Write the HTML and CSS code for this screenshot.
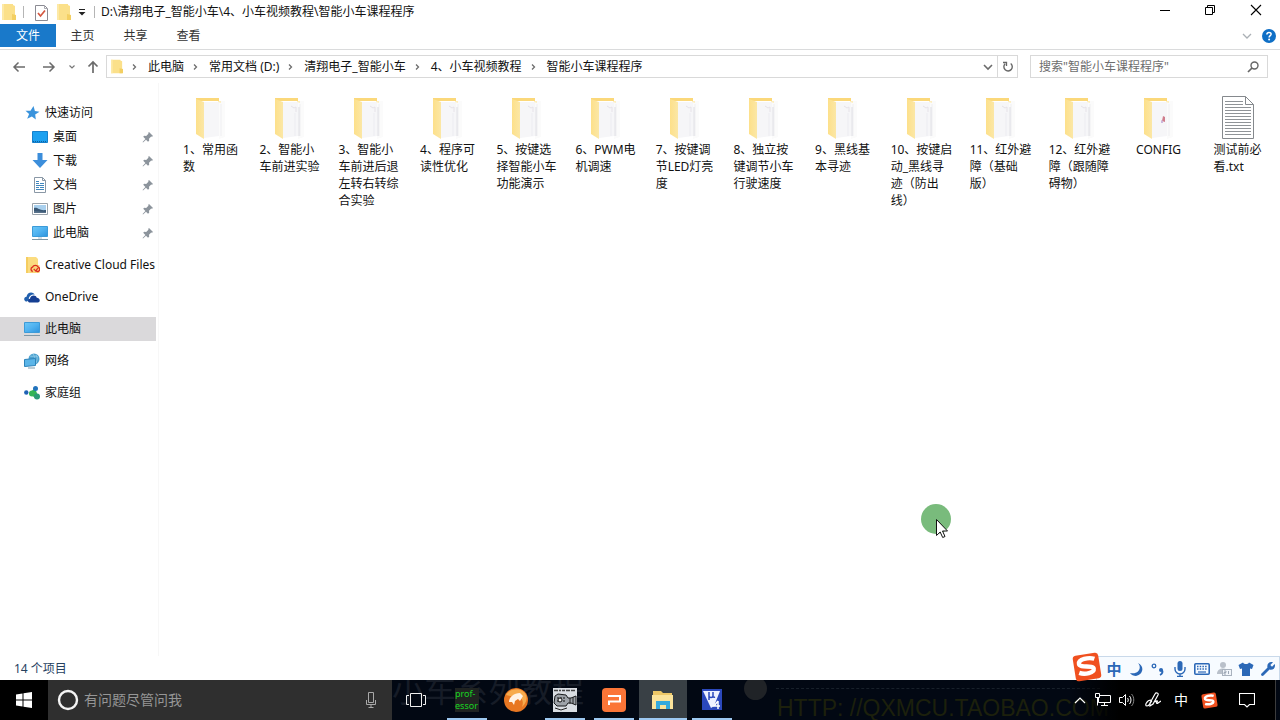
FILE: index.html
```html
<!DOCTYPE html>
<html lang="zh-CN">
<head>
<meta charset="utf-8">
<title>智能小车课程程序</title>
<link rel="stylesheet" href="styles.css">
</head>
<body>
<svg class="defs" aria-hidden="true">
  <defs>
    <linearGradient id="screen" x1="0" y1="0" x2="1" y2="1"><stop offset="0" stop-color="#6cc8f8"/><stop offset=".5" stop-color="#4fb2f0"/><stop offset="1" stop-color="#2c93dd"/></linearGradient>
    <linearGradient id="side" x1="0" y1="0" x2="1" y2="0"><stop offset="0" stop-color="#fde08a"/><stop offset="1" stop-color="#fbe7a6"/></linearGradient>
    <symbol id="mini-folder" viewBox="0 0 14 18"><path d="M0 1h11v1l2 1v14H0z" fill="#fbe08a"/><path d="M10 11l4 1v5h-4z" fill="#f3cf62"/><path d="M0 1h2v16H0z" fill="#fde9a6"/></symbol>
    <symbol id="crumb" viewBox="0 0 8 8"><path d="M2 1.500L4.500 4 2 6.500" fill="none" stroke="#6d6d6d" stroke-width="1.300"/></symbol>
    <symbol id="pin" viewBox="0 0 12 12"><path d="M7 1l4 4-1 .7-.8-.2-2.200 2.300.2 2-1.200 1L4 8.700 1 11.500.6 11 3.400 8 1.200 5.800l1-1 2 .1 2.200-2.200L6.300 1.700z" fill="#8c949c"/></symbol>
    <symbol id="monitor" viewBox="0 0 16 16"><path d="M.5 1.500h15v10H.5z" fill="url(#screen)" stroke="#3c9bd8"/><path d="M6 12h4v2H6z" fill="#d3e0e8"/><path d="M0 14.500h16" stroke="#7d97a6"/></symbol>
    <symbol id="folder" viewBox="0 0 48 48"><path d="M9 5h23v3H9z" fill="#fbd87a"/><path d="M32 8h6v36l-6 2z" fill="#fbfbfb"/><path d="M17 9h15v34l-15 2z" fill="#f6f6f8"/><path d="M31 8h3v2l-3-1z" fill="#fdeec0"/><path d="M34 11v32" stroke="#efeff2"/><path d="M9 6l8 3v37l-8-5z" fill="url(#side)"/></symbol>
    <symbol id="papers" viewBox="0 0 48 48"><path d="M25 13l3 2 2-1v5" fill="none" stroke="#e6e2e8"/><path d="M29 20v23" stroke="#ececf1"/><path d="M33 14v29" stroke="#dddde3"/></symbol>
    <symbol id="sogou" viewBox="0 0 28 28"><g transform="rotate(-9 14 14)"><rect x="2" y="2" width="24" height="24" rx="3" fill="#f0501f"/><path d="M22 7.500C17 5 7 5.500 7 10c0 4.500 13 2.500 13 6.500 0 4-9 4.500-14 1.800" fill="none" stroke="#fff" stroke-width="4"/></g></symbol>
  </defs>
</svg>
<div class="desktop">
  <header class="titlebar">
    <svg class="mini"><use href="#mini-folder"/></svg>
    <span class="rule"></span>
    <button class="tool" aria-label="属性"><svg width="13" height="17" viewBox="0 0 13 17"><path d="M.5 1.500h9l3 3v12H.5z" fill="#fff" stroke="#8b8b93"/><path d="M9.500 1.500v3h3" fill="none" stroke="#a9a9b0"/><path d="M3 9l2.500 3L10 6.500" fill="none" stroke="#d4573f" stroke-width="1.700"/></svg></button>
    <button class="tool" aria-label="新建文件夹"><svg class="mini"><use href="#mini-folder"/></svg></button>
    <button class="tool" aria-label="自定义快速访问工具栏"><svg width="8" height="8" viewBox="0 0 8 8"><path d="M1 1.500h6" stroke="#222"/><path d="M.5 4h7L4 7.500z" fill="#222"/></svg></button>
    <span class="rule rule-title"></span>
    <h1 class="title">D:\清翔电子_智能小车\4、小车视频教程\智能小车课程程序</h1>
    <div class="window-buttons">
      <button aria-label="最小化"><svg width="12" height="12" viewBox="0 0 12 12"><path d="M1 6.500h10" stroke="#000"/></svg></button>
      <button aria-label="还原"><svg width="12" height="12" viewBox="0 0 12 12"><path d="M1.500 3.500h7v7h-7zM3.500 3.500v-2h7v7h-2" fill="none" stroke="#000"/></svg></button>
      <button aria-label="关闭"><svg width="12" height="12" viewBox="0 0 12 12"><path d="M1 1l10 10M11 1L1 11" stroke="#000" stroke-width="1.100"/></svg></button>
    </div>
  </header>
  <nav class="tabs">
    <button class="tab tab-file">文件</button>
    <button class="tab">主页</button>
    <button class="tab">共享</button>
    <button class="tab">查看</button>
    <button class="tab-tool" aria-label="展开功能区"><svg width="10" height="8" viewBox="0 0 10 8"><path d="M1 2l4 4 4-4" fill="none" stroke="#aab0b5" stroke-width="1.300"/></svg></button>
    <button class="tab-tool" aria-label="帮助"><svg width="14" height="14" viewBox="0 0 14 14"><circle cx="7" cy="7" r="7" fill="#0f6fc6"/><path d="M4.900 5.400C4.900 2.700 9.200 2.800 9.100 5.200 9 6.700 7.100 6.600 7.100 8.500" fill="none" stroke="#fff" stroke-width="1.500"/><circle cx="7.100" cy="10.600" r="1" fill="#fff"/></svg></button>
  </nav>
  <div class="navbar">
    <div class="arrows">
      <button aria-label="后退"><svg width="14" height="12" viewBox="0 0 14 12"><path d="M13 6H2M6.500 1.500L2 6l4.500 4.500" fill="none" stroke="#6b6b6b" stroke-width="1.500"/></svg></button>
      <button aria-label="前进"><svg width="14" height="12" viewBox="0 0 14 12"><path d="M1 6h11M7.500 1.500L12 6l-4.500 4.500" fill="none" stroke="#6b6b6b" stroke-width="1.500"/></svg></button>
      <button class="narrow" aria-label="最近浏览的位置"><svg width="8" height="6" viewBox="0 0 8 6"><path d="M1.500 1.500L4 4l2.500-2.500" fill="none" stroke="#777" stroke-width="1.200"/></svg></button>
      <button class="up" aria-label="上移"><svg width="12" height="14" viewBox="0 0 12 14"><path d="M6 13V2M1.500 6.500L6 2l4.500 4.500" fill="none" stroke="#6b6b6b" stroke-width="1.700"/></svg></button>
    </div>
    <div class="address">
      <svg class="mini"><use href="#mini-folder"/></svg>
      <svg class="sep"><use href="#crumb" x="8" y="7" width="8" height="8"/></svg><button>此电脑</button>
      <svg class="sep"><use href="#crumb" x="8" y="7" width="8" height="8"/></svg><button>常用文档 (D:)</button>
      <svg class="sep"><use href="#crumb" x="8" y="7" width="8" height="8"/></svg><button>清翔电子_智能小车</button>
      <svg class="sep"><use href="#crumb" x="8" y="7" width="8" height="8"/></svg><button>4、小车视频教程</button>
      <svg class="sep"><use href="#crumb" x="8" y="7" width="8" height="8"/></svg><button>智能小车课程程序</button>
      <button class="addr-drop" aria-label="以前的位置"><svg width="10" height="8" viewBox="0 0 10 8"><path d="M1 2l4 4 4-4" fill="none" stroke="#6b6b6b" stroke-width="1.600"/></svg></button>
      <button class="refresh" aria-label="刷新"><svg width="12" height="12" viewBox="0 0 12 12"><path d="M8.700 2.500a4.200 4.200 0 1 1-5.600.3" fill="none" stroke="#666" stroke-width="1.400"/><path d="M1 1.500h3.500V5" fill="none" stroke="#666" stroke-width="1.300"/></svg></button>
    </div>
    <label class="search"><input type="search" placeholder='搜索"智能小车课程程序"' aria-label="搜索"><svg width="12" height="12" viewBox="0 0 12 12"><circle cx="7.500" cy="4.500" r="3.500" fill="none" stroke="#666" stroke-width="1.400"/><path d="M5 7L1 11" stroke="#666" stroke-width="1.700"/></svg></label>
  </div>
  <div class="body">
    <aside class="sidebar">
      <ul class="group">
        <li class="row"><svg viewBox="0 0 16 16"><path d="M9.500 1l1.400 5 4.600.8-4.300 2.600.6 5.100-3.900-3.100-4.700 2.300 1.900-4.800L1.500 5.700l5 .1z" fill="#3a93dc"/></svg><span>快速访问</span></li>
        <li class="row sub"><svg viewBox="0 0 16 16"><path d="M.5 2.500h15v11H.5z" fill="#1ba0f0" stroke="#1580cc"/><path d="M1 12.500h14" stroke="#0f5f9e" stroke-dasharray="1 1"/></svg><span>桌面</span><svg class="pin"><use href="#pin"/></svg></li>
        <li class="row sub"><svg viewBox="0 0 16 16"><path d="M5.500 0h5v7H15.500l-7.500 8L.5 7h5z" fill="#3c8edb"/></svg><span>下载</span><svg class="pin"><use href="#pin"/></svg></li>
        <li class="row sub"><svg viewBox="0 0 16 16"><path d="M2.500.5h8l3 3v12h-11z" fill="#fff" stroke="#8a98a6"/><path d="M4 4.500h3M4 6.500h3M8 6.500h4M4 8.500h8M4 10.500h3M8 10.500h4M4 12.500h8" stroke="#3f86bd"/><path d="M10.500.5v3h3" fill="none" stroke="#8a98a6"/></svg><span>文档</span><svg class="pin"><use href="#pin"/></svg></li>
        <li class="row sub"><svg viewBox="0 0 16 16"><path d="M.5 2.500h15v11H.5z" fill="#fff" stroke="#9aa3ab"/><path d="M2 4h12v8H2z" fill="#a9d0ee"/><path d="M2 7c4-1 5 3 12 2v3H2z" fill="#3a5875"/><path d="M2 10l12 1v1H2z" fill="#58718a"/></svg><span>图片</span><svg class="pin"><use href="#pin"/></svg></li>
        <li class="row sub"><svg><use href="#monitor"/></svg><span>此电脑</span><svg class="pin"><use href="#pin"/></svg></li>
      </ul>
      <ul class="group"><li class="row"><svg viewBox="0 0 16 16"><path d="M2 0h10l2 2v14H2z" fill="#fbdc80"/><path d="M2 0h2v16H2z" fill="#f5cd60"/><path d="M6 8h9.500v8H6z" fill="#f8d578"/><path d="M8.800 14.500a2.300 2.300 0 0 1-.3-4.400 3.300 3.300 0 0 1 5.700 0 2.300 2.300 0 0 1-.4 4.400c-2 .2-3-1.300-4-2.500m1.500 2.300c1.700-.2 1-3 3-3" fill="none" stroke="#dd2d20" stroke-width="1.300"/></svg><span>Creative Cloud Files</span></li></ul>
      <ul class="group"><li class="row"><svg viewBox="0 0 16 16"><path d="M3 12.500C-.8 12.500-.5 8 2.500 7.800 3.200 3 8.500 2 10.800 5.500 7 5 4 8 5 11z" fill="#2160ae"/><path d="M6 13.500C2.800 13.500 4 9.600 6 9.800c.6-4.200 6-4.200 6.800-1 3.500.2 4 4.700 1 4.700z" fill="#153e92"/></svg><span>OneDrive</span></li></ul>
      <ul class="group"><li class="row selected"><svg><use href="#monitor"/></svg><span>此电脑</span></li></ul>
      <ul class="group"><li class="row"><svg viewBox="0 0 16 16"><circle cx="10" cy="6" r="5.500" fill="#4ba1cf"/><path d="M6 3c3 1 5-1 8 1M9 1c2 3 3 6 1 10M12 2c2 3 1 5 0 8" fill="none" stroke="#8cc8e6"/><path d="M.5 6.500l11-1v7l-11 1z" fill="#5bb5e8" stroke="#2d83b9"/><path d="M4 15h7" stroke="#7e9cad"/></svg><span>网络</span></li></ul>
      <ul class="group"><li class="row"><svg viewBox="0 0 16 16"><circle cx="2.300" cy="7.500" r="2.200" fill="#1f62b5"/><path d="M5.500 8L11 3l3 8-3 2z" fill="#35b456"/><circle cx="8" cy="8.500" r="3" fill="#35b456"/><circle cx="11.500" cy="3.500" r="2.500" fill="#2273bd"/><circle cx="13" cy="11.500" r="3" fill="#2d9a76"/></svg><span>家庭组</span></li></ul>
    </aside>
    <main class="files">
      <figure class="file"><svg><use href="#folder"/></svg><figcaption>1、常用函<br>数</figcaption></figure>
      <figure class="file"><svg><use href="#folder"/><use href="#papers"/></svg><figcaption>2、智能小<br>车前进实验</figcaption></figure>
      <figure class="file"><svg><use href="#folder"/><use href="#papers"/></svg><figcaption>3、智能小<br>车前进后退<br>左转右转综<br>合实验</figcaption></figure>
      <figure class="file"><svg><use href="#folder"/><use href="#papers"/></svg><figcaption>4、程序可<br>读性优化</figcaption></figure>
      <figure class="file"><svg><use href="#folder"/><use href="#papers"/></svg><figcaption>5、按键选<br>择智能小车<br>功能演示</figcaption></figure>
      <figure class="file"><svg><use href="#folder"/><use href="#papers"/></svg><figcaption>6、PWM电<br>机调速</figcaption></figure>
      <figure class="file"><svg><use href="#folder"/><use href="#papers"/></svg><figcaption>7、按键调<br>节LED灯亮<br>度</figcaption></figure>
      <figure class="file"><svg><use href="#folder"/><use href="#papers"/></svg><figcaption>8、独立按<br>键调节小车<br>行驶速度</figcaption></figure>
      <figure class="file"><svg><use href="#folder"/><use href="#papers"/></svg><figcaption>9、黑线基<br>本寻迹</figcaption></figure>
      <figure class="file"><svg><use href="#folder"/><use href="#papers"/></svg><figcaption>10、按键启<br>动_黑线寻<br>迹（防出<br>线）</figcaption></figure>
      <figure class="file"><svg><use href="#folder"/><use href="#papers"/></svg><figcaption>11、红外避<br>障（基础<br>版）</figcaption></figure>
      <figure class="file"><svg><use href="#folder"/><use href="#papers"/></svg><figcaption>12、红外避<br>障（跟随障<br>碍物）</figcaption></figure>
      <figure class="file"><svg viewBox="0 0 48 48"><use href="#folder"/><path d="M28 23l2 1v5l-3-1z" fill="#cf7d8c"/><path d="M26 27l2 1v2h-2z" fill="#cdb8dc"/></svg><figcaption>CONFIG</figcaption></figure>
      <figure class="file"><svg viewBox="0 0 48 48"><path d="M8.500 3.500h23l8 8v34h-31z" fill="#fff" stroke="#85898d"/><path d="M31.500 3.500v8h8" fill="none" stroke="#85898d"/><path d="M11 8.500h18M11 11.500h18M11 14.500h26M11 17.500h26M11 20.500h26M11 23.500h26M11 26.500h26M11 29.500h26M11 32.500h26M11 35.500h26M11 38.500h26M11 41.500h26" stroke="#8f9397"/></svg><figcaption>测试前必<br>看.txt</figcaption></figure>
    </main>
  </div>
  <footer class="status">14 个项目</footer>
  <div class="taskbar">
    <span class="wall-title" aria-hidden="true">小车系列教程</span>
    <span class="wall-dot"></span>
    <span class="wall-line"></span>
    <span class="wall-url" aria-hidden="true">HTTP: //QXMCU.TAOBAO.COM</span>
    <button class="start" aria-label="开始"><svg width="16" height="16" viewBox="0 0 16 16"><path d="M0 2.500l6.500-1v6H0zM7.500 1.300L16 0v7.500H7.500zM0 8.500h6.500v6l-6.500-1zM7.500 8.500H16V16l-8.500-1.300z" fill="#fff"/></svg></button>
    <label class="cortana">
      <svg width="22" height="22" viewBox="0 0 22 22"><circle cx="11" cy="11" r="9" fill="none" stroke="#f4f4f4" stroke-width="2.400"/></svg>
      <input type="text" placeholder="有问题尽管问我" aria-label="搜索 Windows">
      <svg width="12" height="18" viewBox="0 0 12 18"><path d="M3.500 1.500h5v10h-5zM1.500 9v4.500h9V9M6 14v3M3.500 16.500h5" fill="none" stroke="#a8a8a8"/></svg>
    </label>
    <div class="apps">
      <button class="app taskview" aria-label="任务视图"><svg width="20" height="16" viewBox="0 0 20 16"><path d="M4.500 1.500h11v13h-11zM3 3.500H.5v9H3M17 3.500h2.500v9H17" fill="none" stroke="#f0f0f0"/></svg></button>
      <button class="app running prof"><span>prof-<br>essor</span></button>
      <button class="app" aria-label="浏览器"><svg width="24" height="24" viewBox="0 0 24 24"><circle cx="12" cy="12" r="12" fill="#e87722"/><path d="M2 7C6 0 18-1 22 7c2 5-1 9-4 12 2-6 0-9-3-9z" fill="#f7ac4e"/><path d="M5 14c0-5 5-9 11-9l3 3-3 5-2-2-3 2-1 4-2-3z" fill="#fff3e5"/></svg></button>
      <button class="app running" aria-label="录像"><svg width="24" height="24" viewBox="0 0 24 24"><path d="M0 0h24v24H0z" fill="#d9dde2"/><path d="M1 2.500h4M6 2.500h2M9 2.500h3M13 2.500h4M18 2.500h4" stroke="#444" stroke-width="1.500"/><path d="M2 8l3-2 8 1 2 3h3l5-2v9l-5-2h-3l-2 3H4l-3-3z" fill="#9da2a8" stroke="#17191b"/><path d="M4 10h8M4 13h4M10 13h3" stroke="#111" stroke-dasharray="2 1"/><circle cx="7" cy="12" r="2" fill="#f0f0f0" stroke="#111"/><path d="M17 10v6M20 9v7M2 20l6 2 6-2" stroke="#222" fill="none"/></svg></button>
      <button class="app running" aria-label="WPS 演示"><svg width="24" height="24" viewBox="0 0 24 24"><rect width="24" height="24" rx="4" fill="#fb7537"/><path d="M6 8h12v5.500H7V17" fill="none" stroke="#fff" stroke-width="2"/></svg></button>
      <button class="app running active" aria-label="文件资源管理器"><svg width="24" height="24" viewBox="0 0 24 24"><path d="M2 3h8l2 2h9v16H2z" fill="#edc766"/><path d="M1 7h21v14H1z" fill="#fbe39a"/><path d="M5 13h14v8h-4v-4H9v4H5z" fill="#35aadd"/></svg></button>
      <button class="app running" aria-label="Keil 4"><svg width="24" height="24" viewBox="0 0 24 24"><path d="M2 1h20v21H2z" fill="#2b48bc"/><path d="M3 3h17l-6 15-3 2z" fill="#eef1ff"/><path d="M9 4v8M9 8c0 2 4 2 4 0V4M13 8c0 2 2 1 2 1" fill="none" stroke="#2b48bc" stroke-width="1.500"/><path d="M18 13l-4 5h6M18 13v8" fill="none" stroke="#fff" stroke-width="1.500"/></svg></button>
    </div>
    <div class="tray">
      <button aria-label="显示隐藏的图标"><svg width="12" height="8" viewBox="0 0 12 8"><path d="M1 7l5-5 5 5" fill="none" stroke="#fff" stroke-width="1.200"/></svg></button>
      <button aria-label="网络"><svg width="16" height="16" viewBox="0 0 16 16"><path d="M5 3.500h10.500v7H3.500V6M6 13.500h7M9.500 11v2M.5 1.500h4v4h-4zM2.500 6v7.500" fill="none" stroke="#fff"/></svg></button>
      <button aria-label="音量"><svg width="16" height="16" viewBox="0 0 16 16"><path d="M.5 5.500h3l3-3v11l-3-3h-3zM8.500 6c1 1 1 3 0 4M10.500 4c2 2 2 6 0 8" fill="none" stroke="#fff"/><path d="M12.500 2c3 3 3 9 0 12" fill="none" stroke="#888"/></svg></button>
      <button class="wide" aria-label="Windows Ink"><svg width="16" height="16" viewBox="0 0 16 16"><path d="M5 11L10 2c1-2 4-1 3 1L8 12l-3 2zM6 8C2 8-1 14 2 14c3 0 3-4 5-5M10 10c2-2 3-1 2 0s0 2 1 1l3-2" fill="none" stroke="#fff" stroke-width="1.200"/></svg></button>
      <button class="wide zh">中</button>
      <button class="wide" aria-label="搜狗输入法"><svg width="17" height="17"><use href="#sogou"/></svg></button>
      <button class="notice" aria-label="操作中心"><svg width="16" height="16" viewBox="0 0 16 16"><path d="M.5 1.500h15v11h-5L8 15l-2.500-2.500h-5z" fill="none" stroke="#fff" stroke-width="1.100"/></svg></button>
    </div>
  </div>
  <div class="ime">
    <svg class="ime-logo"><use href="#sogou"/></svg>
    <button class="zh">中</button>
    <button aria-label="半角"><svg viewBox="0 0 16 16"><path d="M10 2c4 4 1 12-8 10 1 2 4 3 6 3 7-1 9-10 2-13z" fill="#2b68b7"/></svg></button>
    <button aria-label="中文标点"><svg viewBox="0 0 16 16"><circle cx="4" cy="5" r="1.800" fill="none" stroke="#2b68b7" stroke-width="1.300"/><circle cx="11" cy="9" r="2" fill="#2b68b7"/><path d="M12 9c1 2 0 4-2 5" fill="none" stroke="#2b68b7" stroke-width="1.800"/></svg></button>
    <button aria-label="语音"><svg viewBox="0 0 16 16"><rect x="5.500" y="0" width="5" height="10" rx="2.500" fill="#2b68b7"/><path d="M3 6v2a5 5 0 0 0 10 0V6M8 13v2.500M5 15.500h6" fill="none" stroke="#2b68b7" stroke-width="1.400"/></svg></button>
    <button aria-label="软键盘"><svg viewBox="0 0 16 16"><rect x=".8" y="2.800" width="14.400" height="10.400" rx="1" fill="none" stroke="#2b68b7" stroke-width="1.600"/><path d="M3 5.500h10M3 8h10" stroke="#2b68b7" stroke-width="1.500" stroke-dasharray="1.500 1.200"/><path d="M4 11h8" stroke="#2b68b7" stroke-width="1.200"/></svg></button>
    <button aria-label="登录"><svg viewBox="0 0 16 16"><circle cx="7" cy="4" r="3" fill="#b9c0ca"/><path d="M1 13c0-7 11-7 12-1v1z" fill="#b9c0ca"/><rect x="6.500" y="8.500" width="9" height="6" fill="#f2f6fb" stroke="#a9b2be"/><path d="M8 10h2v1.500H8V13h2M12.500 10v3" fill="none" stroke="#9da7b5"/></svg></button>
    <button aria-label="皮肤"><svg viewBox="0 0 16 16"><path d="M5 1.500c1 2 5 2 6 0l4.500 2.500-1.500 4-2-.5V15H4V7.500L2 8 .5 4z" fill="#2b68b7"/></svg></button>
    <button aria-label="工具箱"><svg viewBox="0 0 16 16"><path d="M1.500 12.500l6-6C6.500 3 9.500 0 13 1.300L10.300 4l1.700 1.700L14.700 3C16 6.500 13 9.500 9.500 8.500l-6 6c-1.500 1.300-3.300-.5-2-2z" fill="#2b68b7"/></svg></button>
  </div>
  <svg class="pointer" width="34" height="36" viewBox="0 0 34 36"><circle cx="16" cy="15" r="15" fill="#79bb7c"/><path d="M16.500 15.500v16l3.700-3.500 2.500 5.500 2.300-1-2.500-5.500h5z" fill="#fff" stroke="#111"/></svg>
</div>
</body>
</html>
```
FILE: styles.css
```css
* { box-sizing: border-box; }
body {
  margin: 0;
  font: 12px/16px "Noto Sans", "Noto Sans CJK SC", sans-serif;
  color: #111;
  background: #fff;
}
button, input { font: inherit; color: inherit; border: 0; padding: 0; margin: 0; background: none; outline: 0; }
button { display: flex; align-items: center; justify-content: center; white-space: nowrap; flex: none; }
svg { flex: none; }
ul, figure, h1 { margin: 0; padding: 0; list-style: none; }
.defs { position: absolute; width: 0; height: 0; }
.desktop { position: relative; display: flex; flex-direction: column; height: 100vh; overflow: hidden; }

.titlebar { display: flex; align-items: center; height: 24px; padding-left: 2px; }
.mini { width: 14px; height: 18px; }
.rule { width: 1px; height: 12px; margin: 0 4px 0 7px; background: #b5b5b5; }
.tool { margin-left: 7px; }
.tool + .tool { margin-left: 9px; }
.tool + .tool + .tool { margin-left: 7px; }
.rule-title { margin: 0 6px 0 8px; }
.title { font-size: 12px; font-weight: 400; flex: 1; white-space: nowrap; }
.window-buttons { display: flex; align-self: flex-start; }
.window-buttons button { width: 45px; height: 20px; }
.window-buttons button:last-child { width: 48px; }

.tabs { display: flex; height: 26px; border-bottom: 1px solid #dadbdc; color: #333; }
.tab { width: 53px; height: 23px; }
.tab-file { width: 56px; background: #1979ca; color: #fff; }
.tab-tool { width: 22px; height: 24px; }
.tab + .tab-tool { margin-left: auto; }

.navbar { display: flex; align-items: center; padding: 5px 12px 5px 8px; }
.arrows { display: flex; width: 98px; }
.arrows button { width: 22px; margin-right: 8px; }
.arrows .narrow { width: 8px; margin: 0; }
.arrows .up { width: 34px; margin: 0; }
.address { flex: 1; display: flex; align-items: center; height: 23px; padding-left: 4px; border: 1px solid #d9d9d9; }
.address .mini { width: 12px; height: 17px; }
.sep { width: 25px; height: 22px; }
.address .addr-drop { margin-left: auto; width: 18px; height: 21px; }
.refresh { width: 20px; height: 21px; border-left: 1px solid #d9d9d9; }
.search { display: flex; align-items: center; width: 238px; height: 23px; margin-left: 12px; padding: 0 8px; border: 1px solid #d9d9d9; }
.search input { flex: 1; min-width: 0; }
.search input::placeholder { color: #6d6d6d; opacity: 1; }

.body { flex: 1; display: flex; min-height: 0; }
.sidebar { width: 159px; padding-top: 18px; padding-right: 2px; border-right: 1px solid #f7f7f7; flex: none; }
.group { margin-bottom: 8px; }
.row { display: flex; align-items: center; gap: 5px; height: 24px; padding-left: 24px; overflow: hidden; white-space: nowrap; }
.row svg { width: 16px; height: 16px; }
.row.sub { padding-left: 32px; }
.row.selected { background: #dad9db; }
.row .pin { width: 12px; height: 12px; margin-left: auto; margin-right: 2px; }

.files { flex: 1; display: grid; grid-template-columns: repeat(auto-fill, 79px); align-content: start; padding: 10px 0 0 12px; }
.file { display: flex; flex-direction: column; align-items: center; }
.file > svg { width: 48px; height: 48px; }
.file figcaption { line-height: 17px; white-space: nowrap; }

.status { height: 24px; padding: 5px 14px 3px; color: #26415f; }

.taskbar { position: relative; display: flex; height: 40px; background: #020813; overflow: hidden; }
.start { width: 48px; background: #000; position: relative; }
.cortana { position: relative; display: flex; align-items: center; gap: 5px; width: 344px; padding: 0 15px 0 9px; background: #2f2f2f; }
.cortana input { flex: 1; min-width: 0; font-size: 14px; line-height: 20px; }
.cortana input::placeholder { color: #969696; opacity: 1; }
.apps { position: relative; display: flex; gap: 1px; flex: 1; }
.app { width: 48px; height: 40px; position: relative; }
.taskview { margin-right: 2px; }
.running::after { content: ""; position: absolute; left: 4px; right: 4px; bottom: 0; height: 2px; background: #9dc8f0; }
.active { background: #394045; }
.active::after { left: 0; right: 0; }
.prof span { width: 24px; height: 24px; background: #202321; color: #17d321; font: 9px/12px "Noto Sans", sans-serif; text-align: left; }
.tray { position: relative; display: flex; border-right: 1px solid #3c3c3c; margin-right: 4px; background: linear-gradient(90deg, transparent, #000 50px); color: #fff; }
.tray button { width: 24px; height: 40px; }
.tray button:first-child { width: 22px; }
.tray .wide { width: 28px; }
.tray .notice { width: 48px; margin-right: 4px; }
.tray .zh { font-size: 14px; }
.wall-title, .wall-url, .wall-dot, .wall-line { position: absolute; white-space: nowrap; }
.wall-title { left: 392px; top: -8px; font-size: 32px; line-height: 36px; color: #161c27; }
.wall-url { left: 777px; top: 14px; font: 23px/28px "Liberation Sans", sans-serif; color: #1c200c; }
.wall-dot { left: 744px; top: -3px; width: 23px; height: 23px; border-radius: 50%; background: #202327; }
.wall-line { left: 776px; right: 180px; top: 8px; border-top: 1px dashed #18202a; }

.ime { position: absolute; right: 0; bottom: 40px; display: flex; align-items: center; height: 24px; padding-left: 6px; background: #f7fbff; border: 1px solid #c9d9ea; border-bottom: 0; color: #2b68b7; }
.ime button { width: 22px; height: 22px; }
.ime button svg { width: 16px; height: 16px; }
.ime .zh { font-size: 15px; font-weight: 600; }
.ime-logo { position: absolute; left: -25px; bottom: -2px; width: 30px; height: 30px; }
.pointer { position: absolute; left: 920px; top: 504px; }
```
